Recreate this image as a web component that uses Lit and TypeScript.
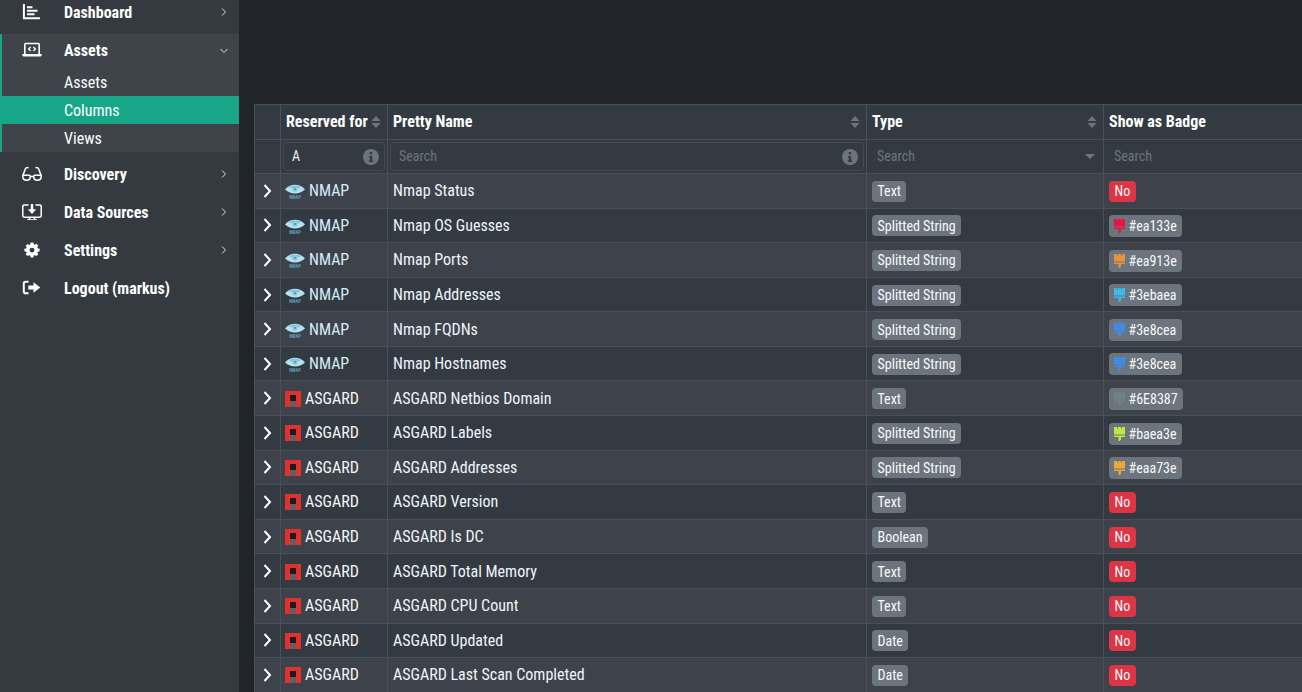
import { LitElement, html, css, svg } from "lit";
import { customElement } from "lit/decorators.js";

type Row = { source: "NMAP" | "ASGARD"; name: string; type: string; badge: string | null };

const rows: Row[] = [
  { source: "NMAP", name: "Nmap Status", type: "Text", badge: null },
  { source: "NMAP", name: "Nmap OS Guesses", type: "Splitted String", badge: "#ea133e" },
  { source: "NMAP", name: "Nmap Ports", type: "Splitted String", badge: "#ea913e" },
  { source: "NMAP", name: "Nmap Addresses", type: "Splitted String", badge: "#3ebaea" },
  { source: "NMAP", name: "Nmap FQDNs", type: "Splitted String", badge: "#3e8cea" },
  { source: "NMAP", name: "Nmap Hostnames", type: "Splitted String", badge: "#3e8cea" },
  { source: "ASGARD", name: "ASGARD Netbios Domain", type: "Text", badge: "#6E8387" },
  { source: "ASGARD", name: "ASGARD Labels", type: "Splitted String", badge: "#baea3e" },
  { source: "ASGARD", name: "ASGARD Addresses", type: "Splitted String", badge: "#eaa73e" },
  { source: "ASGARD", name: "ASGARD Version", type: "Text", badge: null },
  { source: "ASGARD", name: "ASGARD Is DC", type: "Boolean", badge: null },
  { source: "ASGARD", name: "ASGARD Total Memory", type: "Text", badge: null },
  { source: "ASGARD", name: "ASGARD CPU Count", type: "Text", badge: null },
  { source: "ASGARD", name: "ASGARD Updated", type: "Date", badge: null },
  { source: "ASGARD", name: "ASGARD Last Scan Completed", type: "Date", badge: null },
];

const icons = {
  dashboard: svg`<path d="M1.900 0v14.300h16M5 3.300h5.500M5 6.800h10.500M5 10.300h7.500" fill="none" stroke="#fff" stroke-width="2"/>`,
  laptop: svg`<path d="M2.800 12V2.300c0-.5.3-.8.8-.8h12.800c.5 0 .8.300.8.800V12" fill="none" stroke="#fff" stroke-width="1.600"/><path d="M.3 12h19.400v1c0 .8-.5 1.400-1.300 1.400H1.600C.8 14.400.3 13.800.3 13z" fill="#fff"/><path d="M8.600 5 6.700 7l1.900 2M11.400 5l1.900 2-1.900 2" fill="none" stroke="#fff" stroke-width="1.400"/>`,
  glasses: svg`<g fill="none" stroke="#fff" stroke-width="1.500"><path d="M.9 9.500 3.300 3C3.800 1.700 5.300 1.300 6.500 1.800M19.100 9.500 16.700 3C16.200 1.700 14.700 1.300 13.500 1.800"/><path d="M.9 9.200h6.200c.8 0 1.200.5 1.200 1.200v.6c0 1.800-1.600 3.200-3.700 3.200S.9 12.800.9 11zM19.100 9.200h-6.200c-.8 0-1.200.5-1.200 1.200v.6c0 1.800 1.600 3.200 3.700 3.200s3.700-1.400 3.700-3.200zM8.300 10.400h3.400"/></g>`,
  desktop: svg`<path d="M6.500 1H2.200C1.300 1 .8 1.500.8 2.400v9.400c0 .9.5 1.400 1.400 1.400h15.600c.9 0 1.400-.5 1.400-1.400V2.400c0-.9-.5-1.400-1.400-1.400h-4.300M7.800 13.200l-.6 2.500M12.200 13.200l.6 2.500M5 16h10" fill="none" stroke="#fff" stroke-width="1.500"/><path d="M8.800 0h2.400v5.200h3L10 10 5.800 5.200h3z" fill="#fff"/>`,
  cog: svg`<path fill="#fff" d="M8.400.8h3.200l.5 2.300 1.300.6 2-1.200 2.200 2.300-1.200 2 .5 1.300 2.300.5v3.200l-2.300.5-.5 1.300 1.200 2-2.200 2.300-2-1.200-1.300.5-.5 2.300H8.400l-.5-2.300-1.300-.5-2 1.200-2.200-2.300 1.200-2-.5-1.300-2.300-.5V8.800l2.300-.5.5-1.300-1.200-2 2.200-2.300 2 1.200 1.300-.6zM10 7.300a3 3 0 1 0 0 6 3 3 0 0 0 0-6z" transform="translate(1.700 -.2) scale(.83 .8)"/>`,
  logout: svg`<path d="M6.500 1.800H3.600C2.400 1.800 1.800 2.400 1.800 3.600v7.800c0 1.200.6 1.800 1.800 1.800h2.900" fill="none" stroke="#fff" stroke-width="2"/><path d="M11.500 2.300 18.300 7.500l-6.800 5.200V9.500H6.300V5.500h5.200z" fill="#fff"/>`,
};

function icon(name: keyof typeof icons) {
  return html`<svg class="nav-icon" viewBox="0 0 20 16" width="20" height="16">${icons[name]}</svg>`;
}

const nmapLogo = html`<svg class="logo" viewBox="0 0 20 16" width="20" height="16">
  <path d="M0 6.500C3 3 6.500 1.800 10 1.800s7 1.200 10 4.700c-3 2.800-6.500 4-10 4S3 9.300 0 6.500z" fill="#b4e2ee"/>
  <path d="M4 4.200C6 3.200 8 2.800 10 2.800s4 .4 6 1.400c-2 .8-4 1.200-6 1.200S6 5 4 4.200z" fill="#7fc0d8"/>
  <circle cx="10" cy="6" r="2.800" fill="#8ecbe0"/>
  <circle cx="10" cy="6" r="1.200" fill="#5f9fba"/>
  <text x="10" y="15.500" text-anchor="middle" font-size="4.500" font-weight="700" font-family="Roboto, sans-serif" fill="#5f9cb6">NMAP</text>
</svg>`;

const asgardLogo = html`<svg class="logo" viewBox="0 0 16 16" width="16" height="16">
  <rect width="16" height="16" fill="#e0312f"/>
  <rect x="5" y="10" width="6" height="6" fill="#6b5b5b"/>
  <rect x="5" y="4" width="6" height="6" fill="#1d1b1f"/>
</svg>`;

function brush(color: string) {
  return html`<svg class="brush" viewBox="0 0 11 14" width="11" height="14" style="color:${color}">
    <path fill="currentColor" d="M0 0h3v1.500h1V0h3v1.500h1V0h3v7.500H0zM0 8.500h11V10H7v2.500L5.800 14H4.500v-4H0z"/>
  </svg>`;
}

@customElement("app-root")
export class AppRoot extends LitElement {
  static styles = css`
    :host {
      display: block;
      width: 1302px;
      height: 692px;
      overflow: hidden;
      background: #212529;
      font-family: "Roboto Condensed", Roboto, "Liberation Sans", sans-serif;
      font-stretch: 75%;
      font-size: 16px;
      color: #fff;
    }

    .app {
      display: flex;
      height: 692px;
    }

    .sidebar {
      flex: 0 0 239px;
      height: 692px;
      background: #343a40;
      overflow: hidden;
    }

    .nav {
      margin-top: -7px;
    }

    .item {
      position: relative;
      display: flex;
      align-items: center;
      height: 38px;
      font-weight: 700;
      padding-left: 22px;
    }

    .nav-icon {
      flex: none;
      margin-right: 22px;
    }

    .chev {
      position: absolute;
      right: 11px;
      top: 50%;
      margin-top: -5px;
    }

    .group {
      margin: 3px 0;
      background: #3e444a;
      border-left: 2px solid #18a689;
    }

    .group .item {
      height: 34px;
      padding-left: 20px;
      padding-bottom: 2px;
      box-sizing: border-box;
    }

    .sub {
      display: block;
      height: 28px;
      line-height: 29px;
      padding-left: 62px;
    }

    .sub.active {
      margin-left: -2px;
      padding-left: 64px;
      background: #18a689;
    }

    .main {
      flex: 1;
      min-width: 0;
      overflow: hidden;
      padding: 104px 0 0 15px;
    }

    table {
      table-layout: fixed;
      border-collapse: collapse;
      width: 1150px;
    }

    th,
    td {
      border: 1px solid #4a5058;
      padding: 0 5px;
      text-align: left;
      white-space: nowrap;
      overflow: hidden;
    }

    thead th {
      height: 34px;
      background: #343a42;
      font-weight: 700;
    }

    .th {
      display: flex;
      align-items: center;
      justify-content: space-between;
      margin-top: -2px;
    }

    .sort {
      flex: none;
      margin: 2px 1px 0 0;
    }

    .filter th {
      height: 29px;
      padding: 2px;
      font-weight: 400;
      background: #343a42;
    }

    .field {
      display: flex;
      align-items: center;
      justify-content: space-between;
      box-sizing: border-box;
      height: 29px;
      padding: 0 5px 0 8px;
      border: 1px solid #454b53;
      border-radius: 4px;
      color: #e9ecef;
      font-size: 14px;
    }

    .field span {
      margin-bottom: 2px;
    }

    .field.plain {
      padding-left: 7px;
      border-color: transparent;
    }

    .placeholder {
      color: #6c757d;
    }

    .info {
      flex: none;
    }

    tbody td {
      height: 33.58px;
    }

    tbody tr:nth-child(odd) td {
      background: #3e434b;
    }

    tbody tr:nth-child(even) td {
      background: #343a42;
    }

    td.toggle {
      padding: 0;
    }

    td.toggle svg {
      display: block;
      margin-left: 7px;
    }

    td.src {
      padding-left: 4px;
    }

    .source {
      display: flex;
      align-items: center;
      color: #d6edf9;
    }

    .source.asgard {
      color: #f4f6f8;
    }

    .logo {
      flex: none;
      margin: 1px 4px 0 0;
    }

    .name {
      color: #eef5fa;
    }

    .badge {
      display: inline-flex;
      align-items: center;
      height: 21px;
      margin-top: 1px;
      padding: 0 5.5px;
      border-radius: 4px;
      background: #6c757d;
      font-size: 14px;
      color: #f8f9fa;
      vertical-align: middle;
    }

    .badge.no {
      background: #dc3545;
    }

    .badge.color {
      height: 22px;
      margin-top: 1.5px;
    }

    .brush {
      margin-right: 3.5px;
      margin-left: -0.5px;
    }
  `;

  private chevron(open = false) {
    return html`<svg class="chev" viewBox="0 0 8 10" width="8" height="10">
      <path d=${open ? "M.5 3 4 6.500 7.500 3" : "M2 1.500 5.500 5 2 8.500"} fill="none" stroke="#dfe2e5" stroke-width="1"/>
    </svg>`;
  }

  private sortIcon() {
    return html`<svg class="sort" viewBox="0 0 10 12" width="10" height="12">
      <path d="M5 0l4.500 5H.5zM.5 7h9L5 12z" fill="#6c757d"/>
    </svg>`;
  }

  private infoIcon() {
    return html`<svg class="info" viewBox="0 0 16 16" width="16" height="16">
      <circle cx="8" cy="8" r="8" fill="#6c757d"/>
      <rect x="6.800" y="3" width="2.400" height="2.400" fill="#343a42"/>
      <path d="M6 7h3.200v4.500H10.200V13H5.800v-1.500H6.800V8.500H6z" fill="#343a42"/>
    </svg>`;
  }

  render() {
    return html`
      <div class="app">
        <aside class="sidebar">
          <nav class="nav">
            <div class="item">${icon("dashboard")}Dashboard${this.chevron()}</div>
            <div class="group">
              <div class="item">${icon("laptop")}Assets${this.chevron(true)}</div>
              <span class="sub">Assets</span>
              <span class="sub active">Columns</span>
              <span class="sub">Views</span>
            </div>
            <div class="item">${icon("glasses")}Discovery${this.chevron()}</div>
            <div class="item">${icon("desktop")}Data Sources${this.chevron()}</div>
            <div class="item">${icon("cog")}Settings${this.chevron()}</div>
            <div class="item">${icon("logout")}Logout (markus)</div>
          </nav>
        </aside>
        <main class="main">
          <table>
            <colgroup>
              <col style="width:26px" />
              <col style="width:107px" />
              <col style="width:479px" />
              <col style="width:237px" />
              <col style="width:301px" />
            </colgroup>
            <thead>
              <tr>
                <th></th>
                <th><div class="th">Reserved for ${this.sortIcon()}</div></th>
                <th><div class="th">Pretty Name ${this.sortIcon()}</div></th>
                <th><div class="th">Type ${this.sortIcon()}</div></th>
                <th><div class="th">Show as Badge</div></th>
              </tr>
              <tr class="filter">
                <th></th>
                <th><div class="field"><span>A</span>${this.infoIcon()}</div></th>
                <th><div class="field"><span class="placeholder">Search</span>${this.infoIcon()}</div></th>
                <th>
                  <div class="field plain">
                    <span class="placeholder">Search</span>
                    <svg viewBox="0 0 10 5" width="10" height="5"><path d="M0 0h10L5 5z" fill="#6c757d"/></svg>
                  </div>
                </th>
                <th><div class="field plain"><span class="placeholder">Search</span></div></th>
              </tr>
            </thead>
            <tbody>
              ${rows.map(
                (r) => html`<tr>
                  <td class="toggle">
                    <svg viewBox="0 0 10 14" width="10" height="14">
                      <path d="M2.500 1 8 7 2.500 13" fill="none" stroke="#fff" stroke-width="2"/>
                    </svg>
                  </td>
                  <td class="src">
                    <div class="source ${r.source === "ASGARD" ? "asgard" : ""}">
                      ${r.source === "NMAP" ? nmapLogo : asgardLogo}${r.source}
                    </div>
                  </td>
                  <td class="name">${r.name}</td>
                  <td><span class="badge">${r.type}</span></td>
                  <td>
                    ${r.badge
                      ? html`<span class="badge color">${brush(r.badge)}${r.badge}</span>`
                      : html`<span class="badge no">No</span>`}
                  </td>
                </tr>`
              )}
            </tbody>
          </table>
        </main>
      </div>
    `;
  }
}
